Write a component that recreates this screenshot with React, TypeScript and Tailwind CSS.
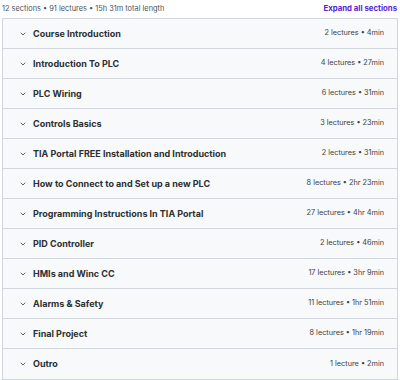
const sections = [
  { title: "Course Introduction", meta: "2 lectures • 4min" },
  { title: "Introduction To PLC", meta: "4 lectures • 27min" },
  { title: "PLC Wiring", meta: "6 lectures • 31min" },
  { title: "Controls Basics", meta: "3 lectures • 23min" },
  { title: "TIA Portal FREE Installation and Introduction", meta: "2 lectures • 31min" },
  { title: "How to Connect to and Set up a new PLC", meta: "8 lectures • 2hr 23min" },
  { title: "Programming Instructions In TIA Portal", meta: "27 lectures • 4hr 4min" },
  { title: "PID Controller", meta: "2 lectures • 46min" },
  { title: "HMIs and Winc CC", meta: "17 lectures • 3hr 9min" },
  { title: "Alarms & Safety", meta: "11 lectures • 1hr 51min" },
  { title: "Final Project", meta: "8 lectures • 1hr 19min" },
  { title: "Outro", meta: "1 lecture • 2min" },
];

const Chevron = () => (
  <svg className="w-[6px] h-[6px] text-[#4d5257] shrink-0" viewBox="0 0 6 6" fill="none" aria-hidden="true">
    <path d="M1 2l2 2 2-2" stroke="currentColor" strokeWidth="0.9" strokeLinecap="round" strokeLinejoin="round" />
  </svg>
);

export default function App() {
  return (
    <div className="w-[400px] h-[380px] bg-white px-[2px] pt-[2px] text-[#2d2f31]" style={{ fontFamily: "Inter, 'Noto Sans', sans-serif" }}>
      <div className="flex items-center justify-between h-[14px] mb-[2px]">
        <span className="text-[7.4px] text-[#4d5257]">12 sections • 91 lectures • 15h 31m total length</span>
        <button type="button" className="text-[7.8px] font-bold text-[#5624d0] pr-[1px]">
          Expand all sections
        </button>
      </div>
      <div className="border border-[#d1d7dc] w-[396px]">
        {sections.map((s, i) => (
          <div
            key={s.title}
            className={`flex items-center justify-between h-[30px] bg-[#f7f9fa] pl-[17px] pr-[13px] ${
              i < sections.length - 1 ? "border-b border-[#d1d7dc]" : ""
            }`}
          >
            <div className="flex items-center gap-[7px]">
              <Chevron />
              <span className="text-[9px] font-bold">{s.title}</span>
            </div>
            <span className="text-[7.3px] text-[#3e4143]">{s.meta}</span>
          </div>
        ))}
      </div>
    </div>
  );
}
